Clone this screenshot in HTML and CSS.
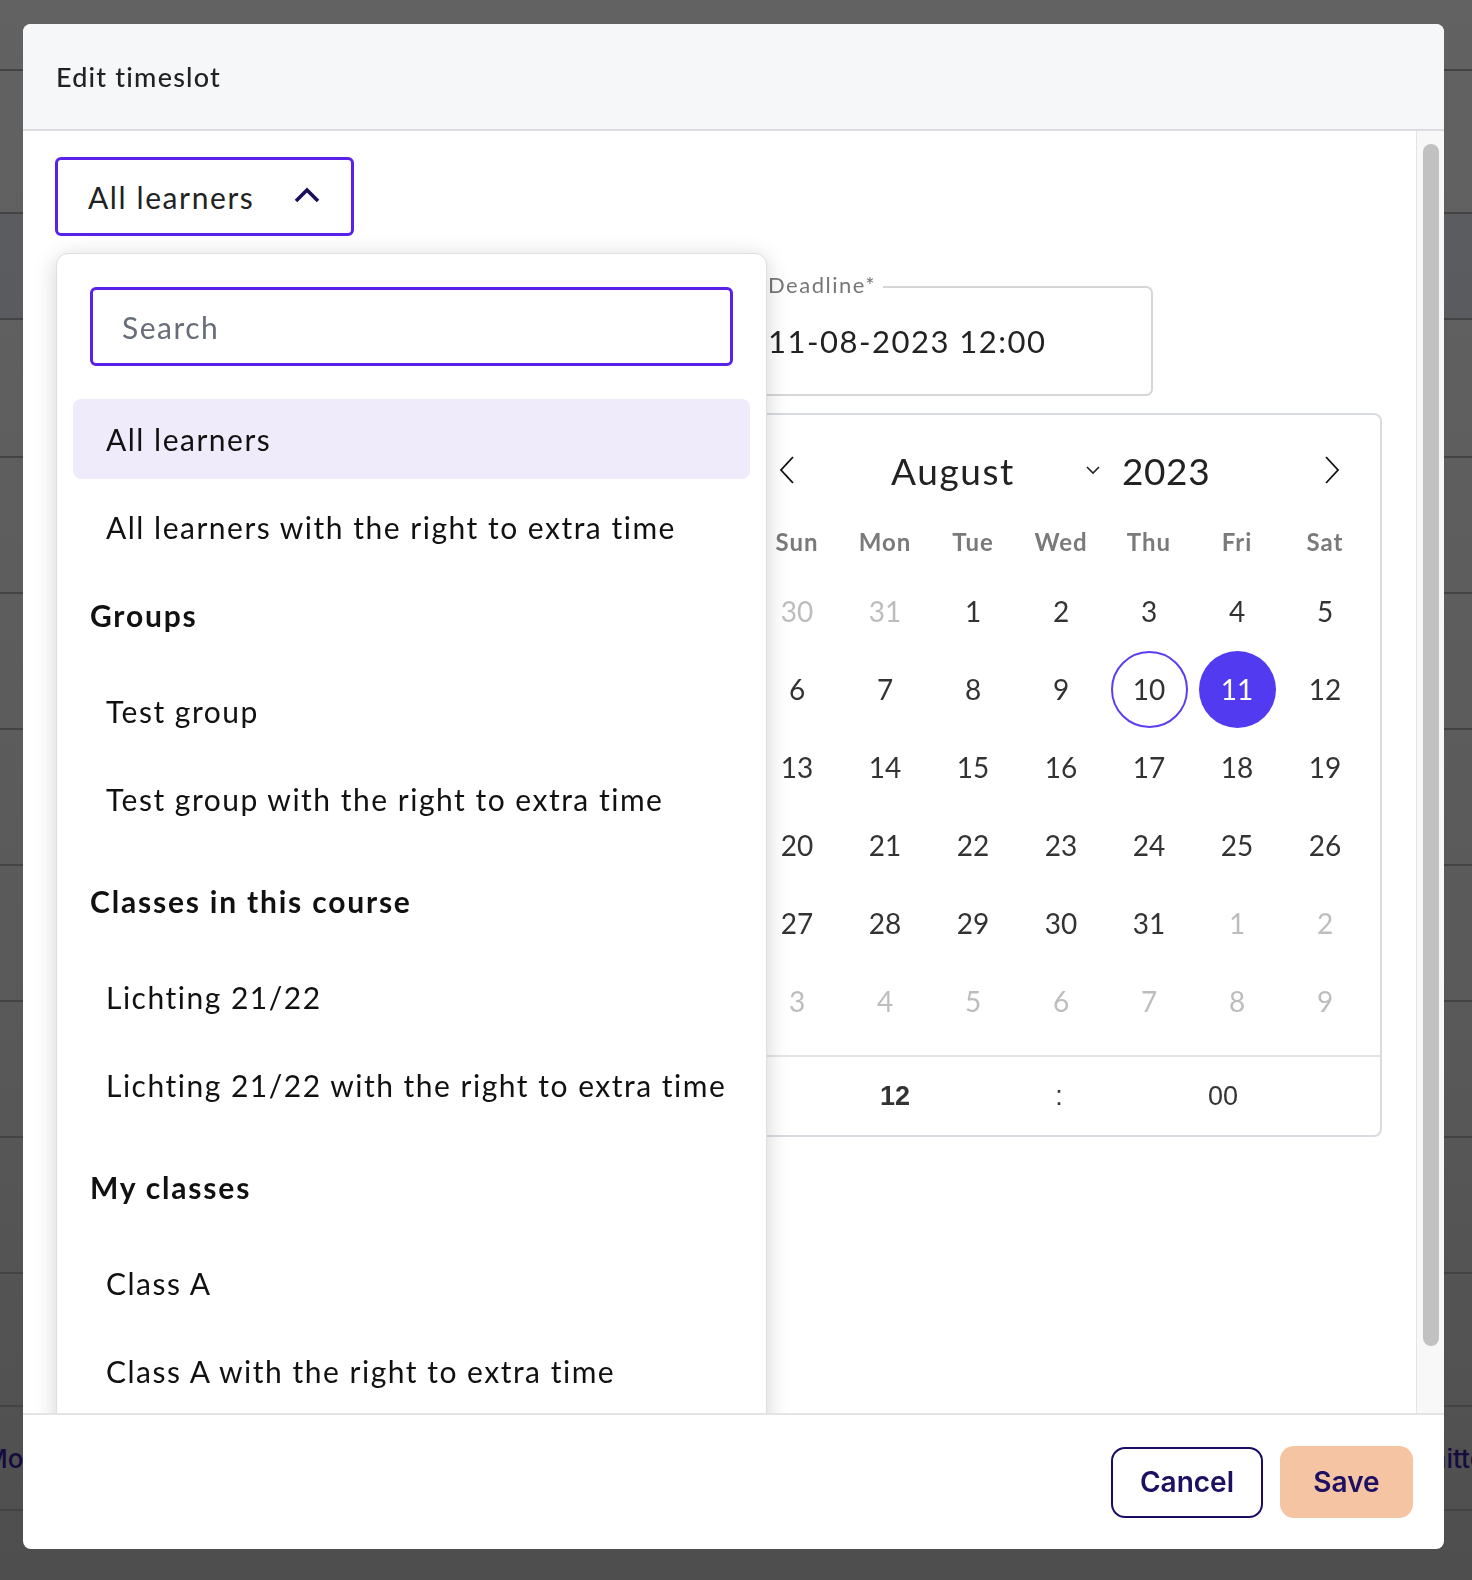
FILE: index.html
```html
<!DOCTYPE html>
<html lang="en">
<head>
    <meta charset="UTF-8">
    <meta name="viewport" content="width=device-width, initial-scale=1.0">
    <title>Edit timeslot</title>
    <link rel="stylesheet" href="styles.css">
</head>
<body>
    <!-- page behind the dialog -->
    <div class="page">
        <div class="page-row row-top"></div>
        <div class="page-row row-head"></div>
        <div class="page-row row-hover"></div>
        <div class="page-row row-tall"></div>
        <div class="page-row"></div>
        <div class="page-row"></div>
        <div class="page-row"></div>
        <div class="page-row"></div>
        <div class="page-row"></div>
        <div class="page-row"></div>
        <div class="page-row row-short"></div>
        <div class="page-row row-text"><span class="cut-left">Mon</span><span class="cut-right">Submitted</span></div>
        <div class="page-row"></div>
    </div>

    <!-- dialog -->
    <div class="modal">
        <div class="modal-header">Edit timeslot</div>

        <div class="modal-body">
            <div class="modal-content">
                <button class="select-trigger">
                    <span>All learners</span>
                    <svg width="26" height="16" viewBox="0 0 26 16"><path d="M2 14 L13 3 L24 14" fill="none" stroke="#1c0e5a" stroke-width="3.6"/></svg>
                </button>

                <div class="fields">
                    <div class="field">
                        <span class="field-label">Deadline*</span>
                        <div class="field-value">11-08-2023 12:00</div>

                        <!-- date picker popup -->
                        <div class="calendar">
                            <div class="cal-head">
                                <span class="cal-arrow">
                                    <svg width="16" height="28" viewBox="0 0 16 28"><path d="M14 1 L2 14 L14 27" fill="none" stroke="#111" stroke-width="1.8"/></svg>
                                </span>
                                <span class="cal-month">August
                                    <svg width="16" height="10" viewBox="0 0 16 10"><path d="M2 2 L8 8 L14 2" fill="none" stroke="#222" stroke-width="1.6"/></svg>
                                </span>
                                <span class="cal-year">2023</span>
                                <span class="cal-arrow next">
                                    <svg width="16" height="28" viewBox="0 0 16 28"><path d="M2 1 L14 14 L2 27" fill="none" stroke="#111" stroke-width="1.8"/></svg>
                                </span>
                            </div>
                            <div class="cal-grid cal-weekdays">
                                <span>Sun</span><span>Mon</span><span>Tue</span><span>Wed</span><span>Thu</span><span>Fri</span><span>Sat</span>
                            </div>
                            <div class="cal-grid cal-days" id="calDays"></div>
                            <div class="cal-time">
                                <span class="hour">12</span>
                                <span>:</span>
                                <span>00</span>
                            </div>
                        </div>
                    </div>
                </div>

                <!-- learner dropdown -->
                <div class="dropdown">
                    <div class="search-box">Search</div>
                    <div class="option-list">
                        <div class="option active">All learners</div>
                        <div class="option">All learners with the right to extra time</div>
                        <div class="group">
                            <div class="group-title">Groups</div>
                            <div class="option">Test group</div>
                            <div class="option">Test group with the right to extra time</div>
                        </div>
                        <div class="group">
                            <div class="group-title">Classes in this course</div>
                            <div class="option">Lichting 21/22</div>
                            <div class="option">Lichting 21/22 with the right to extra time</div>
                        </div>
                        <div class="group">
                            <div class="group-title">My classes</div>
                            <div class="option">Class A</div>
                            <div class="option">Class A with the right to extra time</div>
                        </div>
                    </div>
                </div>
            </div>
            <div class="scroll-track"><div class="scroll-thumb"></div></div>
        </div>

        <div class="modal-footer">
            <button class="btn btn-outline">Cancel</button>
            <button class="btn btn-save">Save</button>
        </div>
    </div>

    <script>
        // build August 2023 (weeks start on Sunday)
        const days = document.getElementById('calDays');
        const cells = [[30, true], [31, true]];
        for (let d = 1; d <= 31; d++) cells.push([d, false]);
        for (let d = 1; d <= 9; d++) cells.push([d, true]);

        cells.forEach(([d, other]) => {
            const cell = document.createElement('span');
            cell.className = 'day';
            if (other) cell.classList.add('other');
            else if (d === 10) cell.classList.add('today');
            else if (d === 11) cell.classList.add('selected');
            cell.innerHTML = `<span>${d}</span>`;
            days.appendChild(cell);
        });
    </script>
</body>
</html>
```

FILE: styles.css
```css
body {
    margin: 0;
    font-family: 'Lato', 'Open Sans', sans-serif;
    color: #222;
    overflow: hidden;
    height: 1580px;
    background: linear-gradient(180deg, #626262 0%, #5a5a5a 60%, #4e4e4e 100%);
}
button {
    font-family: inherit;
    cursor: pointer;
}

/* page behind the overlay */
.page {
    height: 1580px;
    overflow: hidden;
}
.page-row {
    height: 134px;
    border-bottom: 2px solid #434343;
    display: flex;
    align-items: center;
    justify-content: space-between;
}
.row-top {
    height: 69px;
}
.row-head {
    height: 141px;
}
.row-hover {
    height: 104px;
    background: rgba(70, 80, 95, 0.25);
}
.row-tall {
    height: 136px;
}
.row-short {
    height: 131px;
}
.row-text {
    height: 102px;
    font-family: 'Inter', sans-serif;
    font-size: 26px;
    font-weight: 500;
    color: #140b3e;
}
.cut-left {
    margin-left: -16px;
}
.cut-right {
    margin-right: -29px;
}

/* dialog */
.modal {
    position: fixed;
    top: 24px;
    left: 23px;
    width: 1421px;
    height: 1525px;
    background: white;
    border-radius: 8px;
    overflow: hidden;
    display: flex;
    flex-direction: column;
}
.modal-header {
    height: 105px;
    flex-shrink: 0;
    display: flex;
    align-items: center;
    padding-left: 33px;
    background: #f6f7f9;
    border-bottom: 2px solid #dcdde0;
    font-size: 27px;
    font-weight: 500;
    letter-spacing: 1.2px;
    color: #222;
}
.modal-body {
    flex: 1;
    display: flex;
    min-height: 0;
}
.modal-content {
    flex: 1;
    position: relative;
    overflow: hidden;
    padding: 26px 32px 0;
}
.scroll-track {
    width: 21px;
    padding: 13px 0 0 6px;
    background: #f8f8f8;
    border-left: 1px solid #e4e4e4;
}
.scroll-thumb {
    width: 16px;
    height: 1202px;
    border-radius: 8px;
    background: #c1c1c1;
}
.modal-footer {
    height: 134px;
    flex-shrink: 0;
    border-top: 2px solid #e4e4e4;
    display: flex;
    align-items: center;
    justify-content: flex-end;
    gap: 17px;
    padding-right: 31px;
}

/* select trigger */
.select-trigger {
    width: 299px;
    height: 79px;
    display: flex;
    align-items: center;
    gap: 40px;
    padding: 0 0 0 30px;
    background: white;
    border: 3px solid #5a22e8;
    border-radius: 6px;
    font-size: 30px;
    letter-spacing: 1.6px;
    color: #222;
}
.select-trigger svg {
    margin-top: -4px;
}

/* deadline field */
.fields {
    display: flex;
    justify-content: flex-end;
    width: 1098px;
    margin-top: 50px;
}
.field {
    position: relative;
    width: 397px;
    height: 106px;
    border: 2px solid #d6d6d6;
    border-radius: 7px;
    display: flex;
    align-items: center;
}
.field-label {
    position: absolute;
    top: -16px;
    left: 8px;
    padding: 0 7px 0 6px;
    background: white;
    font-size: 22px;
    letter-spacing: 1.5px;
    color: #777;
    line-height: 26px;
}
.field-value {
    padding-left: 14px;
    font-size: 31px;
    letter-spacing: 1.5px;
    color: #222;
}

/* calendar popup */
.calendar {
    position: absolute;
    top: 125px;
    left: -13px;
    width: 637px;
    background: white;
    border: 2px solid #d8dce1;
    border-radius: 8px;
    z-index: 1;
}
.cal-head {
    height: 110px;
    display: flex;
    align-items: center;
    font-size: 37px;
    color: #222;
}
.cal-arrow {
    width: 40px;
    margin-left: 24px;
    display: flex;
    justify-content: center;
}
.cal-arrow.next {
    margin-left: auto;
    margin-right: 28px;
}
.cal-month {
    width: 210px;
    margin-left: 84px;
    display: flex;
    align-items: center;
    justify-content: space-between;
    padding-right: 10px;
    letter-spacing: 1.6px;
}
.cal-year {
    margin-left: 11px;
    letter-spacing: 0.6px;
}
.cal-grid {
    display: grid;
    grid-template-columns: repeat(7, 88px);
    padding: 0 10px;
}
.cal-weekdays {
    height: 32px;
    align-items: center;
    text-align: center;
    font-size: 24px;
    font-weight: 700;
    letter-spacing: 1px;
    color: #7a7a7a;
}
.cal-days {
    grid-auto-rows: 78px;
    padding-top: 15px;
    padding-bottom: 15px;
}
.day {
    display: flex;
    align-items: center;
    justify-content: center;
    font-size: 28px;
    color: #333;
}
.day span {
    width: 77px;
    height: 77px;
    box-sizing: border-box;
    border-radius: 50%;
    display: flex;
    align-items: center;
    justify-content: center;
}
.day.other {
    color: #bdbdbd;
}
.day.today span {
    border: 2px solid #5a3ff0;
}
.day.selected span {
    background: #523af0;
    color: white;
}
.cal-time {
    height: 78px;
    border-top: 2px solid #e2e4e8;
    display: grid;
    grid-template-columns: repeat(3, 164px);
    padding-left: 70px;
    align-items: center;
    text-align: center;
    font-family: 'Liberation Sans', Arial, sans-serif;
    font-size: 27px;
    color: #333;
}
.cal-time .hour {
    font-weight: 700;
}

/* learner dropdown */
.dropdown {
    position: absolute;
    top: 122px;
    left: 33px;
    width: 709px;
    height: 1300px;
    background: white;
    border: 1px solid #dedede;
    border-radius: 12px;
    box-shadow: 0 4px 22px rgba(0, 0, 0, 0.18);
    z-index: 2;
}
.search-box {
    height: 73px;
    margin: 33px 33px 0;
    padding-left: 29px;
    border: 3px solid #5a22e8;
    border-radius: 6px;
    display: flex;
    align-items: center;
    font-size: 30px;
    letter-spacing: 1.5px;
    color: #686e78;
}
.option-list {
    margin-top: 33px;
    padding: 0 16px;
}
.option {
    height: 80px;
    margin-bottom: 8px;
    padding-left: 33px;
    border-radius: 8px;
    display: flex;
    align-items: center;
    font-size: 30px;
    letter-spacing: 1.5px;
    color: #111;
}
.option.active {
    background: #efebfb;
}
.group + .group {
    margin-top: 22px;
}
.group-title {
    height: 80px;
    margin-bottom: 16px;
    padding-left: 17px;
    display: flex;
    align-items: center;
    font-size: 30px;
    font-weight: 700;
    letter-spacing: 1.8px;
    color: #111;
}

/* footer buttons */
.btn {
    height: 71px;
    border-radius: 14px;
    font-family: 'Inter', sans-serif;
    font-size: 28px;
    font-weight: 600;
    color: #1d0f62;
}
.btn-outline {
    width: 152px;
    background: white;
    border: 2px solid #1b0b63;
}
.btn-save {
    width: 133px;
    height: 72px;
    background: #f4c4a3;
    border: none;
}
```
